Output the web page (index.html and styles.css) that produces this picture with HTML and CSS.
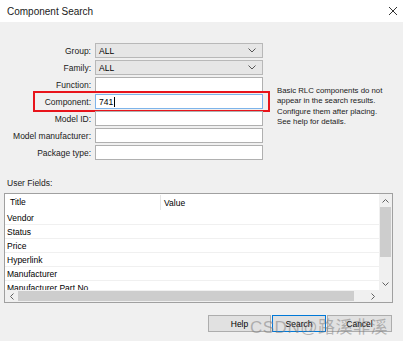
FILE: index.html
```html
<!doctype html>
<html lang="en">

<head>
  <meta charset="UTF-8" />
  <title>Component Search</title>
  <link rel="stylesheet" href="styles.css">
</head>

<body>
  <div class="titlebar">
    <span>Component Search</span>
    <svg class="close" width="10" height="10" viewBox="0 0 10 10">
      <path d="M1 1L9 9M9 1L1 9" stroke="#333" stroke-width="1" fill="none" />
    </svg>
  </div>

  <div class="dialog">
    <div class="top">
      <div class="fields">
        <div class="row">
          <label>Group:</label>
          <div class="select">ALL
            <svg class="chev" width="8" height="5" viewBox="0 0 8 5"><path d="M0.5 0.5L4 4L7.5 0.5" stroke="#555" fill="none" /></svg>
          </div>
        </div>
        <div class="row">
          <label>Family:</label>
          <div class="select">ALL
            <svg class="chev" width="8" height="5" viewBox="0 0 8 5"><path d="M0.5 0.5L4 4L7.5 0.5" stroke="#555" fill="none" /></svg>
          </div>
        </div>
        <div class="row">
          <label>Function:</label>
          <div class="input"></div>
        </div>
        <div class="row marked">
          <label>Component:</label>
          <div class="input focus">741<span class="caret"></span></div>
        </div>
        <div class="row">
          <label>Model ID:</label>
          <div class="input"></div>
        </div>
        <div class="row">
          <label>Model manufacturer:</label>
          <div class="input"></div>
        </div>
        <div class="row">
          <label>Package type:</label>
          <div class="input"></div>
        </div>
      </div>
      <p class="hint">Basic RLC components do not<br>appear in the search results.<br>Configure them after placing.<br>See help for details.</p>
    </div>

    <div class="uf-label">User Fields:</div>
    <div class="grid">
      <div class="grid-main">
        <div class="list">
          <div class="thead">
            <div class="c1">Title</div>
            <div class="c2">Value</div>
          </div>
          <div class="trow"><div class="c1">Vendor</div><div class="c2"></div></div>
          <div class="trow"><div class="c1">Status</div><div class="c2"></div></div>
          <div class="trow"><div class="c1">Price</div><div class="c2"></div></div>
          <div class="trow"><div class="c1">Hyperlink</div><div class="c2"></div></div>
          <div class="trow"><div class="c1">Manufacturer</div><div class="c2"></div></div>
          <div class="trow"><div class="c1">Manufacturer Part No.</div><div class="c2"></div></div>
        </div>
        <div class="vscroll">
          <div class="arrow"><svg width="7" height="4" viewBox="0 0 7 4"><path d="M0.5 3.5L3.5 0.5L6.5 3.5" stroke="#606060" fill="none" /></svg></div>
          <div class="vthumb"></div>
          <div class="vtrack"></div>
          <div class="arrow"><svg width="7" height="4" viewBox="0 0 7 4"><path d="M0.5 0.5L3.5 3.5L6.5 0.5" stroke="#606060" fill="none" /></svg></div>
        </div>
      </div>
      <div class="hscroll">
        <div class="harrow"><svg width="4" height="7" viewBox="0 0 4 7"><path d="M3.5 0.5L0.5 3.5L3.5 6.5" stroke="#606060" fill="none" /></svg></div>
        <div class="hthumb"></div>
        <div class="htrack"></div>
        <div class="harrow"><svg width="4" height="7" viewBox="0 0 4 7"><path d="M0.5 0.5L3.5 3.5L0.5 6.5" stroke="#606060" fill="none" /></svg></div>
        <div class="corner"></div>
      </div>
    </div>

    <div class="buttons">
      <button class="help">Help</button>
      <button class="search">Search</button>
      <button class="cancel">Cancel</button>
    </div>
  </div>

  <div class="watermark">CSDN@路溪非溪</div>
</body>

</html>
```

FILE: styles.css
```css
body {
  margin: 0;
  width: 403px;
  height: 341px;
  overflow: hidden;
  position: relative;
  font-family: "Liberation Sans", Arial, sans-serif;
  font-size: 8.5px;
  color: #000;
  background: #f0f0f0;
}

.titlebar {
  height: 22px;
  background: #fff;
  display: flex;
  align-items: center;
  justify-content: space-between;
  padding: 0 5px 0 7px;
  font-size: 10px;
  color: #1a1a1a;
}

.close {
  display: block;
}

.dialog {
  padding: 21px 10px 0 4px;
}

.top {
  display: flex;
}

.fields {
  display: flex;
  flex-direction: column;
  gap: 2px;
  width: 259px;
}

.row {
  display: grid;
  grid-template-columns: 87px 168px;
  column-gap: 4px;
  height: 15px;
  align-items: center;
  position: relative;
}

.row label {
  text-align: right;
  color: #1a1a1a;
}

.select,
.input {
  height: 15px;
  box-sizing: border-box;
  border: 1px solid #b0b0b0;
  display: flex;
  align-items: center;
  padding-left: 3px;
}

.select {
  background: #e6e6e6;
  border-color: #b8b8b8;
  justify-content: space-between;
  padding-right: 6px;
}

.input {
  background: #fff;
}

.input.focus {
  border-color: #7eb4ea;
}

.caret {
  display: inline-block;
  width: 1px;
  height: 10px;
  background: #000;
  margin-left: 1px;
}

.marked::after {
  content: "";
  position: absolute;
  left: 29px;
  right: -7px;
  top: -3px;
  bottom: -3px;
  border: 2px solid #e8141b;
}

.hint {
  margin: 43px 0 0 14px;
  font-size: 7.8px;
  line-height: 10.3px;
  color: #1a1a1a;
}

.uf-label {
  margin: 18px 0 0 3px;
  line-height: 10px;
  color: #1a1a1a;
}

.grid {
  margin-top: 5px;
  width: 389px;
  height: 110px;
  box-sizing: border-box;
  border: 1px solid #a0a0a0;
  background: #fff;
  display: flex;
  flex-direction: column;
}

.grid-main {
  display: flex;
  height: 96px;
}

.list {
  flex: 1;
  overflow: hidden;
}

.thead,
.trow {
  display: flex;
  align-items: center;
}

.thead {
  height: 17px;
}

.thead .c1 {
  width: 150px;
  padding-left: 5px;
  border-right: 1px solid #e5e5e5;
  height: 15px;
  line-height: 15px;
}

.thead .c2 {
  padding-left: 3px;
}

.trow {
  height: 14px;
  box-sizing: border-box;
  border-bottom: 1px solid #f0f0f0;
}

.trow .c1 {
  width: 153px;
  padding-left: 2px;
}

.vscroll {
  width: 13px;
  background: #f0f0f0;
  display: flex;
  flex-direction: column;
}

.arrow {
  height: 13px;
  display: flex;
  align-items: center;
  justify-content: center;
}

.vthumb {
  height: 50px;
  margin: 0 1px;
  background: #cdcdcd;
}

.vtrack {
  flex: 1;
}

.hscroll {
  height: 12px;
  background: #f0f0f0;
  display: flex;
  align-items: stretch;
}

.harrow {
  width: 13px;
  display: flex;
  align-items: center;
  justify-content: center;
}

.hthumb {
  width: 336px;
  margin: 1px 0;
  background: #cdcdcd;
}

.htrack {
  flex: 1;
}

.corner {
  width: 13px;
  background: #f0f0f0;
}

.buttons {
  margin-top: 12px;
  display: flex;
  justify-content: flex-end;
  gap: 1px;
  padding-right: 1px;
}

button {
  height: 17px;
  box-sizing: border-box;
  border: 1px solid #adadad;
  background: #e1e1e1;
  font-family: "Liberation Sans", Arial, sans-serif;
  font-size: 8.5px;
  color: #000;
  padding: 0;
}

.help {
  width: 63px;
}

.search {
  width: 54px;
  border-color: #0078d7;
}

.cancel {
  width: 65px;
}

.watermark {
  position: absolute;
  left: 250px;
  top: 313px;
  font-family: "Liberation Sans", "Noto Sans CJK SC", sans-serif;
  font-size: 17px;
  color: rgba(120, 120, 120, 0.5);
  letter-spacing: 0.5px;
  white-space: nowrap;
}
```
